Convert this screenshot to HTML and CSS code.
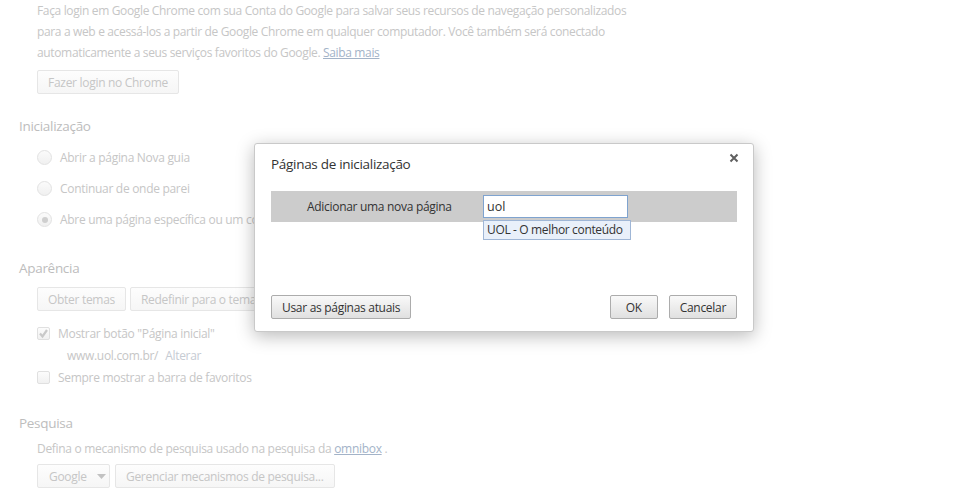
FILE: index.html
```html
<!DOCTYPE html>
<html lang="pt-BR">
<head>
<meta charset="utf-8">
<title>Configurações</title>
<link rel="stylesheet" href="styles.css">
</head>
<body>
<div class="page">
  <div class="indent">
    <p class="intro">Faça login em Google Chrome com sua Conta do Google para salvar seus recursos de navegação personalizados para a web e acessá-los a partir de Google Chrome em qualquer computador. Você também será conectado automaticamente a seus serviços favoritos do Google. <a class="link" href="#">Saiba mais</a></p>
    <div class="btn faded login">Fazer login no Chrome</div>
  </div>

  <h3 class="sec-title sec-init">Inicialização</h3>
  <div class="indent">
    <div class="radio-row"><span class="radio"></span><span>Abrir a página Nova guia</span></div>
    <div class="radio-row"><span class="radio"></span><span>Continuar de onde parei</span></div>
    <div class="radio-row"><span class="radio checked"></span><span>Abre uma página específica ou um conjunto de páginas.</span></div>
  </div>

  <h3 class="sec-title sec-appear">Aparência</h3>
  <div class="indent">
    <div class="btn-row">
      <div class="btn faded">Obter temas</div>
      <div class="btn faded">Redefinir para o tema padrão</div>
    </div>
    <div class="check-row first"><span class="check on"><svg viewBox="0 0 13 13" width="13" height="13"><path d="M3 6.5 L5.5 9.5 L10 3" fill="none" stroke="#c9c9c9" stroke-width="2.2"/></svg></span><span>Mostrar botão "Página inicial"</span></div>
    <div class="url-row"><span>www.uol.com.br/</span><span class="alter">Alterar</span></div>
    <div class="check-row"><span class="check"></span><span>Sempre mostrar a barra de favoritos</span></div>
  </div>

  <h3 class="sec-title sec-search">Pesquisa</h3>
  <div class="indent">
    <p class="search-desc">Defina o mecanismo de pesquisa usado na pesquisa da <a class="link" href="#">omnibox</a> .</p>
    <div class="btn-row search-btns">
      <div class="btn faded select"><span>Google</span><svg class="caret" viewBox="0 0 9 5" width="9" height="5"><path d="M0 0 H9 L4.5 5 Z" fill="#c2c2c2"/></svg></div>
      <div class="btn faded">Gerenciar mecanismos de pesquisa...</div>
    </div>
  </div>
</div>

<div class="dialog">
  <div class="dlg-head">
    <h2 class="dlg-title">Páginas de inicialização</h2>
    <svg class="close" viewBox="0 0 10 10" width="10" height="10"><path d="M1.5 1.5 L8.5 8.5 M8.5 1.5 L1.5 8.5" stroke="#5f5f5f" stroke-width="2"/></svg>
  </div>
  <div class="dlg-list">
    <div class="add-row">
      <span class="add-label">Adicionar uma nova página</span>
      <div class="field">
        <div class="input">uol</div>
        <div class="suggest">UOL - O melhor conteúdo</div>
      </div>
    </div>
  </div>
  <div class="dlg-foot">
    <div class="btn">Usar as páginas atuais</div>
    <div class="foot-right">
      <div class="btn ok">OK</div>
      <div class="btn">Cancelar</div>
    </div>
  </div>
</div>
</body>
</html>
```

FILE: styles.css
```css
* { box-sizing: border-box; }
html, body { margin: 0; padding: 0; background: #fff; }
body {
  width: 956px;
  height: 500px;
  overflow: hidden;
  font-family: "Open Sans", "Noto Sans", sans-serif;
  font-size: 12px;
  color: #c6c6c6;
  position: relative;
}
.page { padding-left: 19px; }
.indent { padding-left: 18px; }

.intro {
  margin: 0;
  width: 598px;
  line-height: 21px;
  letter-spacing: -0.35px;
}
.link { color: #a3b3c8; text-decoration: underline; }

.btn {
  display: inline-flex;
  align-items: center;
  justify-content: center;
  height: 24px;
  padding: 0 10px;
  border: 1px solid #acacac;
  border-radius: 2px;
  background: linear-gradient(#f9f9f9, #e0e0e0);
  color: #333;
  font-size: 12px;
  white-space: nowrap;
  letter-spacing: -0.3px;
}
.btn.faded {
  border-color: #e6e6e6;
  background: linear-gradient(#fdfdfd, #f6f6f6);
  color: #c6c6c6;
}
.login { margin-top: 7px; width: 142px; }

.sec-title {
  margin: 0;
  height: 20px;
  line-height: 20px;
  font-size: 13.5px;
  font-weight: normal;
  color: #bdbdbd;
  letter-spacing: -0.3px;
}
.sec-init { margin-top: 22px; }
.sec-appear { margin-top: 23px; }
.sec-search { margin-top: 25px; }

.radio-row {
  height: 31px;
  display: flex;
  align-items: center;
  gap: 8px;
  letter-spacing: -0.3px;
  white-space: nowrap;
}
.sec-init + .indent { margin-top: 6px; }
.radio {
  width: 15px; height: 15px;
  border-radius: 50%;
  border: 1px solid #e2e2e2;
  background: linear-gradient(#fbfbfb, #f0f0f0);
  position: relative;
  flex: none;
}
.radio.checked::after {
  content: "";
  position: absolute;
  left: 3.5px; top: 3.5px;
  width: 6px; height: 6px;
  border-radius: 50%;
  background: #cfcfcf;
}

.btn-row { display: flex; gap: 4px; margin-top: 9px; }
.btn-row .btn { padding: 0 10px; }

.check-row {
  height: 22px;
  display: flex;
  align-items: center;
  gap: 8px;
  letter-spacing: -0.3px;
}
.check-row.first { margin-top: 11px; }
.check {
  width: 13px; height: 13px;
  border: 1px solid #e0e0e0;
  border-radius: 2px;
  background: linear-gradient(#fcfcfc, #f1f1f1);
  display: flex;
  flex: none;
}
.check svg { display: block; margin: -1px; }
.url-row {
  height: 22px;
  display: flex;
  align-items: center;
  gap: 7px;
  padding-left: 30px;
  letter-spacing: -0.3px;
}
.alter { color: #c6cbd3; }

.search-desc {
  margin: 6px 0 0;
  line-height: 20px;
  letter-spacing: -0.3px;
}
.search-btns { margin-top: 5px; gap: 5px; }
.search-btns .btn.select { width: 73px; padding: 0 5px 0 11px; gap: 10px; justify-content: flex-start; }
.caret { display: block; flex: none; }

/* Dialog */
.dialog {
  position: absolute;
  left: 254px;
  top: 143px;
  width: 500px;
  height: 189px;
  background: #fff;
  border: 1px solid #c9c9c9;
  border-radius: 3px;
  box-shadow: 0 4px 18px rgba(0,0,0,0.28);
  padding: 0 16px 12px;
  display: flex;
  flex-direction: column;
  color: #333;
}
.dlg-head {
  height: 47px;
  display: flex;
  align-items: flex-start;
  justify-content: space-between;
}
.dlg-title {
  margin: 10px 0 0;
  font-size: 13.5px;
  font-weight: normal;
  line-height: 20px;
  color: #333;
  letter-spacing: -0.3px;
}
.close { margin-top: 9px; margin-right: -2px; }
.dlg-list { height: 104px; }
.add-row {
  height: 31px;
  background: #cccccc;
  display: flex;
  align-items: flex-start;
}
.add-label {
  width: 212px;
  padding-left: 36px;
  line-height: 31px;
  white-space: nowrap;
  letter-spacing: -0.3px;
}
.field { margin-top: 4px; display: flex; flex-direction: column; align-items: flex-start; }
.input {
  width: 145px;
  height: 23px;
  border: 1px solid #7fa3cf;
  background: #fff;
  padding: 0 3px;
  line-height: 21px;
  font-size: 12.5px;
}
.suggest {
  margin-top: 2px;
  width: 148px;
  height: 20px;
  border: 1px solid #9fb6d6;
  background: #e9f0fa;
  padding: 0 3px;
  line-height: 18px;
  font-size: 12px;
  white-space: nowrap;
  letter-spacing: -0.35px;
}
.dlg-foot {
  display: flex;
  justify-content: space-between;
  align-items: center;
}
.foot-right { display: flex; gap: 11px; }
.btn.ok { width: 48px; }
.dlg-foot .btn { padding: 0 10px; }
```
